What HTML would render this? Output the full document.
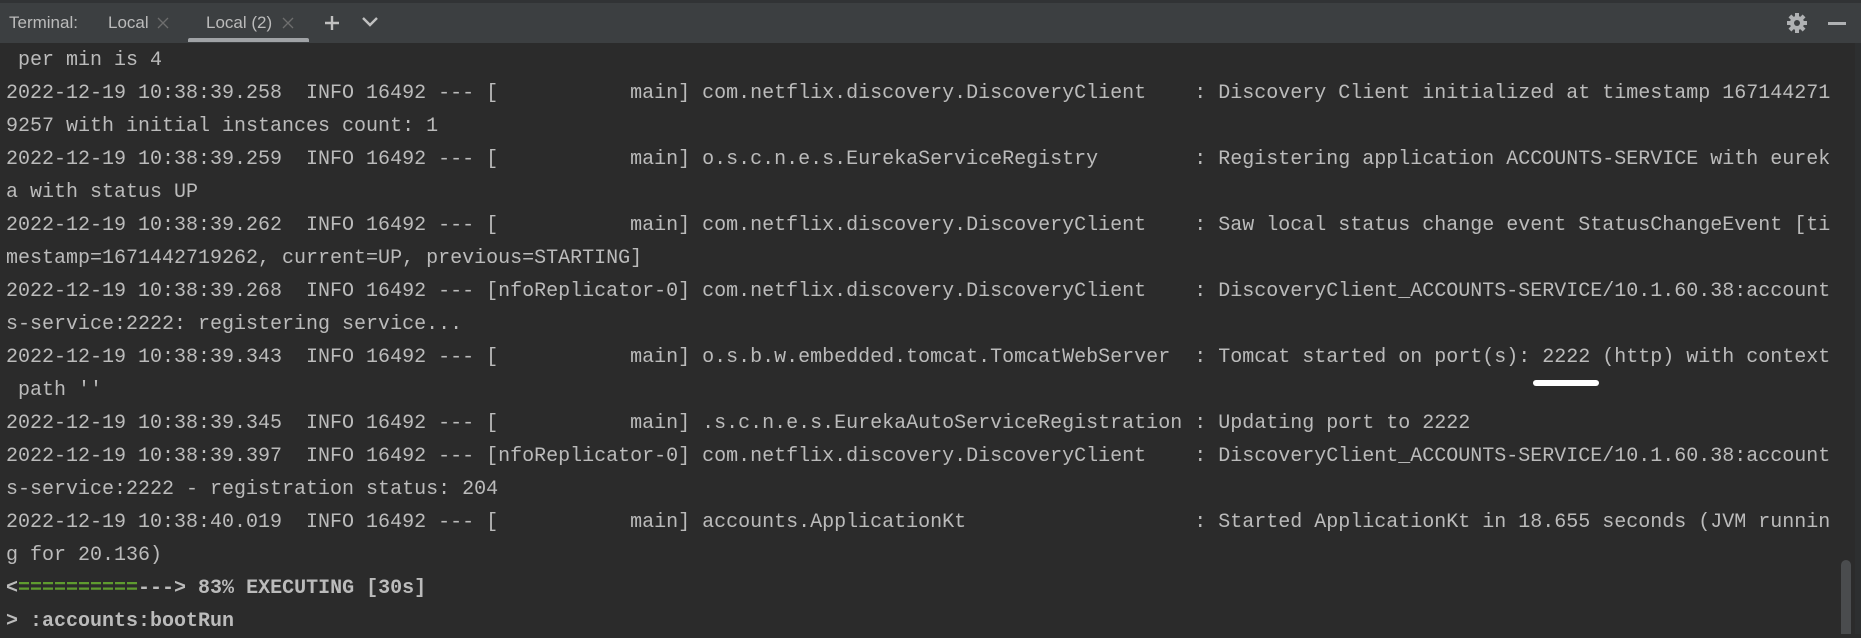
<!DOCTYPE html>
<html><head><meta charset="utf-8"><style>
html,body{margin:0;padding:0;}
body{width:1861px;height:634px;background:#2b2b2b;position:relative;overflow:hidden;font-family:"Liberation Sans",sans-serif;}
.top{position:absolute;left:0;top:0;width:1861px;height:3px;background:#313335;}
.bar{position:absolute;left:0;top:3px;width:1861px;height:40px;background:#3c3f41;}
.bar span{position:absolute;top:10px;font-size:17px;color:#bbbbbb;}
.ul{position:absolute;left:188px;top:35px;width:121px;height:4px;background:#a0a3a6;border-radius:2px 2px 0 0;}
.c{position:absolute;left:0;top:1px;width:1861px;height:634px;}
.l{position:absolute;left:6px;font-family:"Liberation Mono",monospace;font-size:20px;color:#bbbbbb;white-space:pre;line-height:33px;height:33px;}
.b{font-weight:bold;}
.g{color:#5f9c2f;}
.sb{position:absolute;left:1841px;top:560px;width:10px;height:74px;background:#4a4c4e;border-radius:5px 5px 0 0;}
.edge{position:absolute;left:1855px;top:43px;width:6px;height:591px;background:#2d2f30;}
</style></head><body>
<div class="edge"></div>
<div class="c">
<div class="l" style="top:43px"> per min is 4</div>
<div class="l" style="top:76px">2022-12-19 10:38:39.258  INFO 16492 --- [           main] com.netflix.discovery.DiscoveryClient    : Discovery Client initialized at timestamp 167144271</div>
<div class="l" style="top:109px">9257 with initial instances count: 1</div>
<div class="l" style="top:142px">2022-12-19 10:38:39.259  INFO 16492 --- [           main] o.s.c.n.e.s.EurekaServiceRegistry        : Registering application ACCOUNTS-SERVICE with eurek</div>
<div class="l" style="top:175px">a with status UP</div>
<div class="l" style="top:208px">2022-12-19 10:38:39.262  INFO 16492 --- [           main] com.netflix.discovery.DiscoveryClient    : Saw local status change event StatusChangeEvent [ti</div>
<div class="l" style="top:241px">mestamp=1671442719262, current=UP, previous=STARTING]</div>
<div class="l" style="top:274px">2022-12-19 10:38:39.268  INFO 16492 --- [nfoReplicator-0] com.netflix.discovery.DiscoveryClient    : DiscoveryClient_ACCOUNTS-SERVICE/10.1.60.38:account</div>
<div class="l" style="top:307px">s-service:2222: registering service...</div>
<div class="l" style="top:340px">2022-12-19 10:38:39.343  INFO 16492 --- [           main] o.s.b.w.embedded.tomcat.TomcatWebServer  : Tomcat started on port(s): 2222 (http) with context</div>
<div class="l" style="top:373px"> path ''</div>
<div class="l" style="top:406px">2022-12-19 10:38:39.345  INFO 16492 --- [           main] .s.c.n.e.s.EurekaAutoServiceRegistration : Updating port to 2222</div>
<div class="l" style="top:439px">2022-12-19 10:38:39.397  INFO 16492 --- [nfoReplicator-0] com.netflix.discovery.DiscoveryClient    : DiscoveryClient_ACCOUNTS-SERVICE/10.1.60.38:account</div>
<div class="l" style="top:472px">s-service:2222 - registration status: 204</div>
<div class="l" style="top:505px">2022-12-19 10:38:40.019  INFO 16492 --- [           main] accounts.ApplicationKt                   : Started ApplicationKt in 18.655 seconds (JVM runnin</div>
<div class="l" style="top:538px">g for 20.136)</div>
<div class="l b" style="top:571px">&lt;<span class="g">==========</span>---&gt; 83% EXECUTING [30s]</div>
<div class="l b" style="top:604px">&gt; :accounts:bootRun</div>
</div>
<div style="position:absolute;left:1533px;top:380px;width:66px;height:6px;background:#fff;border-radius:3px"></div>
<div class="top"></div>
<div class="bar">
<span style="left:9px">Terminal:</span>
<span style="left:108px">Local</span>
<svg style="position:absolute;left:157px;top:14px" width="12" height="12"><path d="M1 1l10 10M11 1L1 11" stroke="#6e6e6e" stroke-width="1.3"/></svg>
<span style="left:206px">Local (2)</span>
<svg style="position:absolute;left:282px;top:14px" width="12" height="12"><path d="M1 1l10 10M11 1L1 11" stroke="#6e6e6e" stroke-width="1.3"/></svg>
<div class="ul"></div>
<svg style="position:absolute;left:323px;top:11px" width="18" height="18"><path d="M9 2v14M2 9h14" stroke="#c0c0c0" stroke-width="2.4"/></svg>
<svg style="position:absolute;left:361px;top:12px" width="18" height="14"><path d="M2 3l7 7 7-7" stroke="#c0c0c0" stroke-width="2.4" fill="none"/></svg>
<svg style="position:absolute;left:1786px;top:9px" width="22" height="22" viewBox="0 0 22 22"><g fill="#afb1b3"><circle cx="11" cy="11" r="7"/><rect x="9" y="1" width="4" height="20"/><rect x="1" y="9" width="20" height="4"/><rect x="9" y="1" width="4" height="20" transform="rotate(45 11 11)"/><rect x="9" y="1" width="4" height="20" transform="rotate(-45 11 11)"/></g><circle cx="11" cy="11" r="3" fill="#3c3f41"/></svg>
<div style="position:absolute;left:1828px;top:19px;width:18px;height:3px;background:#afb1b3"></div>
</div>
<div class="sb"></div>
</body></html>
